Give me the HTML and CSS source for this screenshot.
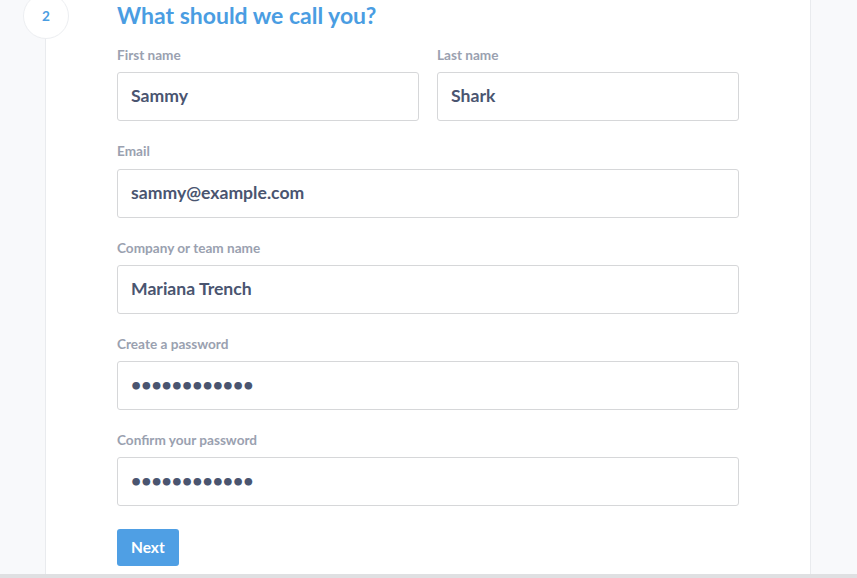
FILE: index.html
```html
<!DOCTYPE html>
<html lang="en">
<head>
<meta charset="utf-8">
<title>What should we call you?</title>
<link rel="stylesheet" href="styles.css">
</head>
<body>
<main class="page">
  <section class="card">
    <div class="step">2</div>
    <h1 class="title">What should we call you?</h1>
    <form class="form">
      <div class="row">
        <div class="field">
          <label class="label" for="first">First name</label>
          <input class="input" id="first" type="text" value="Sammy" readonly>
        </div>
        <div class="field">
          <label class="label" for="last">Last name</label>
          <input class="input" id="last" type="text" value="Shark" readonly>
        </div>
      </div>
      <div class="field">
        <label class="label" for="email">Email</label>
        <input class="input" id="email" type="text" value="sammy@example.com" readonly>
      </div>
      <div class="field">
        <label class="label" for="company">Company or team name</label>
        <input class="input" id="company" type="text" value="Mariana Trench" readonly>
      </div>
      <div class="field">
        <label class="label" for="pw">Create a password</label>
        <input class="input" id="pw" type="password" value="sammyshark12" readonly>
      </div>
      <div class="field">
        <label class="label" for="pw2">Confirm your password</label>
        <input class="input" id="pw2" type="password" value="sammyshark12" readonly>
      </div>
      <div class="actions">
        <button class="btn" type="button">Next</button>
      </div>
    </form>
  </section>
</main>
<div class="bottom-bar"></div>
</body>
</html>
```

FILE: styles.css
```css
html, body {
  margin: 0;
  padding: 0;
}
body {
  height: 578px;
  overflow: hidden;
  display: flex;
  flex-direction: column;
  background: #f8f9fb;
  font-family: Lato, "Open Sans", "Liberation Sans", sans-serif;
}
.page {
  flex: 1;
  display: flex;
  min-height: 0;
}
.card {
  position: relative;
  box-sizing: border-box;
  width: 766px;
  margin-left: 45px;
  padding: 0 71px;
  background: #ffffff;
  border-left: 1px solid #e9ebee;
  border-right: 1px solid #e9ebee;
}
.step {
  position: absolute;
  left: -23px;
  top: -7px;
  box-sizing: border-box;
  width: 46px;
  height: 46px;
  border-radius: 50%;
  border: 1px solid #eceef1;
  background: #ffffff;
  color: #4a9de2;
  font-size: 13.6px;
  font-weight: 700;
  display: flex;
  align-items: center;
  justify-content: center;
}
.title {
  margin: 0 0 15px;
  font-size: 23px;
  line-height: 30px;
  font-weight: 700;
  color: #4a9de2;
}
.form {
  display: flex;
  flex-direction: column;
  gap: 20px;
}
.row {
  display: grid;
  grid-template-columns: 1fr 1fr;
  gap: 18px;
}
.field {
  display: flex;
  flex-direction: column;
}
.label {
  font-size: 13.6px;
  line-height: 20.3px;
  font-weight: 700;
  color: #9aa1b0;
  margin-bottom: 7px;
}
.input {
  box-sizing: border-box;
  width: 100%;
  height: 49px;
  margin: 0;
  padding: 0 13px 2px;
  border: 1px solid #d6d7d9;
  border-radius: 3px;
  background: #ffffff;
  font-family: Lato, "Open Sans", "Liberation Sans", sans-serif;
  font-size: 17.6px;
  font-weight: 700;
  color: #4a5570;
  outline: none;
}
.actions {
  padding-top: 3px;
}
.btn {
  height: 37px;
  padding: 0 14px 2px;
  border: none;
  border-radius: 3px;
  background: #4f9fe4;
  color: #ffffff;
  font-family: Lato, "Open Sans", "Liberation Sans", sans-serif;
  font-size: 15.5px;
  font-weight: 700;
  cursor: pointer;
}
.bottom-bar {
  height: 4px;
  background: #dfe0e2;
}
```
